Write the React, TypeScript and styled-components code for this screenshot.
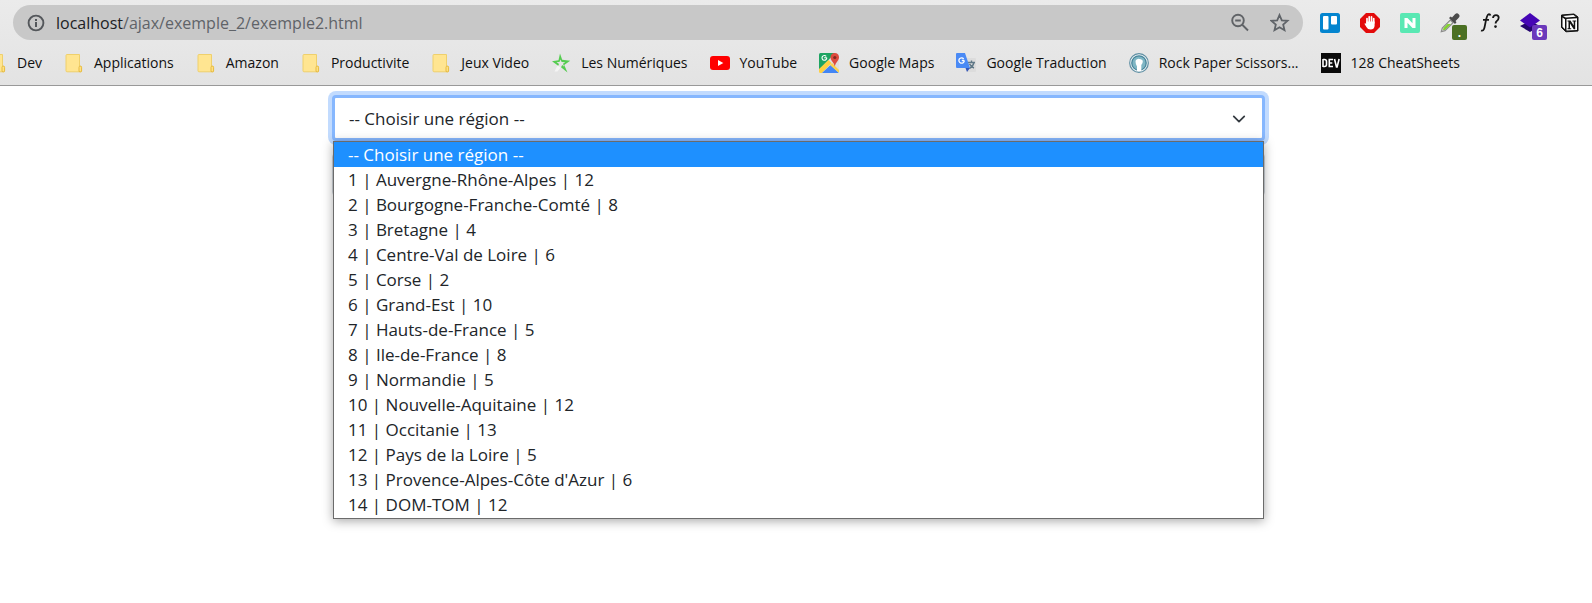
import { useState } from 'react';
import type { ReactNode } from 'react';
import styled, { createGlobalStyle } from 'styled-components';

const GlobalStyle = createGlobalStyle`
  * { box-sizing: border-box; }
  body {
    margin: 0;
    min-height: 100vh;
    background: #fff;
    color: #212529;
    font-family: "Open Sans", "Noto Sans", sans-serif;
  }
`;

const BrowserBar = styled.header`
  display: flex;
  flex-direction: column;
  gap: 10px;
  height: 86px;
  padding: 5px 0 0;
  overflow: hidden;
  background: linear-gradient(#ebebeb, #e3e3e3);
  border-bottom: 1px solid #999;
`;

const AddressRow = styled.div`
  display: flex;
  align-items: center;
  gap: 17px;
  padding: 0 12px 0 13px;
`;

const AddressBar = styled.div`
  flex: 1;
  min-width: 0;
  display: flex;
  align-items: center;
  height: 35px;
  padding: 0 13px 0 12px;
  border-radius: 18px;
  background: #c8c8c8;
`;

const Host = styled.label`
  margin-left: 11px;
  font-size: 16px;
  line-height: 24px;
  color: #202124;
`;

const PathInput = styled.input`
  flex: 1;
  min-width: 0;
  padding: 0;
  border: 0;
  outline: 0;
  background: transparent;
  font-family: inherit;
  font-size: 16px;
  line-height: 24px;
  color: #5f6368;
`;

const IconButton = styled.button`
  position: relative;
  flex: none;
  display: flex;
  width: 20px;
  height: 20px;
  padding: 0;
  border: 0;
  background: none;
`;

const AddressActions = styled.div`
  display: flex;
  gap: 20px;
`;

const Extensions = styled.nav`
  display: flex;
  gap: 20px;
`;

const Badge = styled.span<{ $color: string }>`
  position: absolute;
  left: 12px;
  top: 12px;
  width: 15px;
  height: 15px;
  border-radius: 2px;
  background: ${(p) => p.$color};
  color: #fff;
  font-size: 12px;
  font-weight: 700;
  line-height: 16px;
  text-align: center;
`;

const Bookmarks = styled.nav`
  display: flex;
  gap: 22px;
  margin-left: -13px;
  height: 26px;
  align-items: center;
`;

const BookmarkLink = styled.a`
  flex: none;
  display: flex;
  align-items: center;
  gap: 10px;
  color: #111;
  font-size: 14px;
  line-height: 20px;
  text-decoration: none;
  white-space: nowrap;
`;

const Page = styled.main`
  display: grid;
  grid-template-columns: 332fr 933fr 327fr;
  padding-top: 9px;
`;

const Form = styled.form`
  grid-column: 2;
  display: flex;
  flex-direction: column;
  gap: 12px;
`;

const Field = styled.div`
  position: relative;
  display: flex;
`;

const RegionSelect = styled.select<{ $focused?: boolean }>`
  width: 100%;
  height: ${(p) => (p.$focused ? 46 : 43)}px;
  padding: 0 14px;
  appearance: none;
  border: ${(p) => (p.$focused ? '3px solid #86b7fe' : '1px solid #ced4da')};
  border-radius: 4px;
  outline: 0;
  background: #fff;
  box-shadow: ${(p) => (p.$focused ? '0 0 0 4px #c2dbfe' : 'none')};
  color: #212529;
  font-family: inherit;
  font-size: 17px;
`;

const Chevron = styled.svg`
  position: absolute;
  right: 19px;
  top: 17px;
  pointer-events: none;
`;

const OptionList = styled.ul`
  position: absolute;
  z-index: 1;
  top: 100%;
  left: 1px;
  right: 1px;
  margin: 0;
  padding: 0 0 1px;
  list-style: none;
  border: 1px solid #6b6b6b;
  background: #fff;
  box-shadow: 0 2px 10px rgba(0, 0, 0, 0.35);
`;

const Option = styled.li<{ $active: boolean }>`
  height: 25px;
  padding: 0 14px;
  font-size: 17px;
  line-height: 25px;
  color: ${(p) => (p.$active ? '#fff' : '#212529')};
  background: ${(p) => (p.$active ? '#1e90ff' : '#fff')};
  cursor: default;
`;

const Icon = ({ children }: { children: ReactNode }) => (
  <svg width="20" height="20" viewBox="0 0 20 20" aria-hidden="true">
    {children}
  </svg>
);

const InfoIcon = () => (
  <Icon>
    <circle cx="11" cy="10" r="7.4" fill="none" stroke="#54575b" strokeWidth="1.9" />
    <path d="M10 9h2v5h-2zM10 6h2v2h-2z" fill="#54575b" />
  </Icon>
);

const ZoomOutIcon = () => (
  <Icon>
    <g fill="none" stroke="#606367" strokeWidth="1.9">
      <circle cx="8" cy="7.500" r="5.8" />
      <path d="M12 11.500l6 6M5.200 7.500h5.600" />
    </g>
  </Icon>
);

const StarIcon = () => (
  <Icon>
    <path
      d="M9.500 2l2.300 5.300 5.700.5-4.300 3.800 1.300 5.600-5-3-5 3 1.300-5.600L1.500 7.800l5.700-.5z"
      fill="none"
      stroke="#5f6368"
      strokeWidth="1.8"
    />
  </Icon>
);

const FolderIcon = () => (
  <Icon>
    <path d="M3 1.500h12.500v12h2v4.500q0 .8-1 .8H3q-1 0-1-1V2.500q0-1 1-1z" fill="#ffe591" stroke="#efd06c" />
    <path d="M15 18.500v-4q0-1.500 1.200-1.500t1.400 1.500v3.500q0 .8-1 .8z" fill="#ffe083" stroke="#e6bb43" />
  </Icon>
);

const GreenStarIcon = () => (
  <Icon>
    <path d="M3.500 18.500l3-6 3 2-3 4z" fill="#f4f4f4" />
    <path
      d="M9 .5l2.200 6.300 8 .9-6 4.200 3.300 7.600-6.500-5.200L11.200 12l2 1.800-1.200-3 2.200-1.600-3.500-.2L9.300 6.500 8.500 9H5.500L8 11l-.8 1.800L1 8.300l6.500-1z"
      fill="#55cc50"
    />
  </Icon>
);

const YouTubeIcon = () => (
  <Icon>
    <rect y="3" width="20" height="14" rx="3" fill="#f00" />
    <path d="M8 7l5.300 3L8 13z" fill="#fff" />
  </Icon>
);

const MapsIcon = () => (
  <Icon>
    <clipPath id="map-frame"><rect width="20" height="20" rx="1.500" /></clipPath>
    <g clipPath="url(#map-frame)">
      <path d="M0 0h20v20H0z" fill="#dedede" />
      <path d="M0 0h16L0 17z" fill="#1da462" />
      <path d="M0 16L9.500 7l3 3L3 20H0z" fill="#ffd041" />
      <path d="M3 20l8.500-8L20 20z" fill="#4386f5" />
      <path d="M11 12l2-2 7 7v3z" fill="#fbd24e" />
    </g>
    <path d="M7.800 4.800H5.200M7.200 3.300a2.400 2.400 0 10.6 1.500" fill="none" stroke="#fff" strokeWidth="1.100" />
    <path d="M15.800 0a4.400 4.400 0 00-4.300 4.500c0 3 3.300 4.500 4.300 9 1-4.500 4.200-6 4.200-9A4.300 4.300 0 0015.800 0z" fill="#dd4b3e" />
    <circle cx="15.800" cy="4.500" r="1.600" fill="#812820" />
  </Icon>
);

const TranslateIcon = () => (
  <Icon>
    <path d="M9 5h10q1 0 1 1v12q0 1-1 1h-8z" fill="#dcdcdc" />
    <path d="M12 9.500h7M15.500 7.500v2M18 9.500q-1 4-4.500 6M13.500 11q2 3 4.500 4" fill="none" stroke="#607988" strokeWidth="1.400" />
    <path d="M1 0h8l5 15H1q-1 0-1-1V1q0-1 1-1z" fill="#4a8af5" />
    <path d="M9.500 15H14l-3 4z" fill="#3456b8" />
    <path d="M8.200 7.500H5.800M7.700 5.800a2.700 2.700 0 10.6 1.700" fill="none" stroke="#fff" strokeWidth="1.300" />
  </Icon>
);

const FistIcon = () => (
  <Icon>
    <circle cx="10" cy="10" r="9.300" fill="#f3f7f8" stroke="#5f8fa3" strokeWidth="1.200" />
    <circle cx="10" cy="10" r="7.200" fill="#7fb6c4" stroke="#47859b" strokeWidth="1.300" />
    <path d="M6.500 8.500q0-2 1.700-2.200 1-.8 2-.2 1.200-.5 1.900.3 1.700.1 1.700 2.200 0 2-1.500 3.300V18H8v-4.500Q6.500 11 6.500 8.500z" fill="#fff" />
  </Icon>
);

const DevIcon = () => (
  <Icon>
    <path d="M0 0h20v20H0z" fill="#0a0a0a" />
    <path
      d="M2 6v8M2 6.500h1.500q2 0 2 2v3q0 2-2 2H2M12 6.500H8.300v7H12M8.300 10h3M13.500 6l2 8h.6l2-8"
      fill="none"
      stroke="#fff"
      strokeWidth="1.600"
    />
  </Icon>
);

const TrelloIcon = () => (
  <Icon>
    <rect width="20" height="20" rx="2.500" fill="#0485cf" />
    <rect x="3" y="3" width="5.500" height="13.500" rx="1" fill="#fff" />
    <rect x="11" y="3" width="6" height="8.500" rx="1" fill="#fff" />
  </Icon>
);

const BlockIcon = () => (
  <Icon>
    <path d="M6 0h8l6 6v8l-6 6H6l-6-6V6z" fill="#e30b0b" />
    <path
      d="M7 10V5.500M9.200 9V3.800M11.500 9V3.800M13.700 10V5.500"
      stroke="#fff"
      strokeWidth="1.700"
      strokeLinecap="round"
    />
    <path d="M6.200 8.500h8.400V13q-.5 3.500-4 3.500-3 0-4.200-2.500l-2-3.300q1-1 1.800.2z" fill="#fff" />
  </Icon>
);

const GreenNIcon = () => (
  <Icon>
    <rect width="20" height="20" rx="2" fill="#59e8b3" />
    <path d="M4.500 15V5h3l5 5.300V5h3v10h-3l-5-5.300V15z" fill="#fff" />
  </Icon>
);

const DropperIcon = () => (
  <Icon>
    <path d="M1.300 18.700l1-3.700 8-8 2.700 2.700-8 8z" fill="#e9efe2" stroke="#8b8b8b" strokeWidth="1.200" />
    <path d="M3 17l.5-2 4-4h3.500l-6 6z" fill="#83d12f" />
    <path d="M9 5l1.700-1.500 1.300 1L15 1.300Q17-.5 18.700 1.200 20.500 3 18.500 5l-3 3 1 1.300L15 11z" fill="#4c4c4c" />
  </Icon>
);

const FunctionIcon = () => (
  <Icon>
    <path d="M10.500 2.500q-.5-1.500-2-1.200C6.300 2 6 8 4.600 14q-.8 4.500-3.600 3.500M3 6.800h6" fill="none" stroke="#161616" strokeWidth="1.800" />
    <path d="M13 5q.3-2.800 3-2.800t2.700 2.600Q18.600 7 16.600 8.200q-1 .8-1 2.400" fill="none" stroke="#161616" strokeWidth="1.800" />
    <circle cx="15.500" cy="13.600" r="1.300" fill="#161616" />
  </Icon>
);

const LayersIcon = () => (
  <Icon>
    <path d="M0 13l10-5 10 5-10 6z" fill="#24046f" />
    <path d="M0 7.500l10-7.500 10 7.500-10 7z" fill="#4505b5" />
  </Icon>
);

const NotionIcon = () => (
  <Icon>
    <path d="M1.500 2L14 1l4 3v14l-12 .8-4.500-4.300z" fill="#111" stroke="#111" strokeLinejoin="round" />
    <path d="M3 2.900l10.500-.8 2.300 1.600-10 .8zM2.500 4.500L5 6.300v10l-2.500-2.500z" fill="#fff" />
    <path d="M6.500 6L17 5.200v11.700l-10.500.7z" fill="#fff" />
    <path d="M7.500 7.500h3l3.200 5V8.500h-1.200v-1h3.700v1h-1v7.700h-1.500L10 10.500v4.700h1.200v1H7.500v-1h1V8.500h-1z" fill="#111" />
  </Icon>
);

const bookmarks: { label: string; icon: ReactNode }[] = [
  { label: 'Dev', icon: <FolderIcon /> },
  { label: 'Applications', icon: <FolderIcon /> },
  { label: 'Amazon', icon: <FolderIcon /> },
  { label: 'Productivite', icon: <FolderIcon /> },
  { label: 'Jeux Video', icon: <FolderIcon /> },
  { label: 'Les Numériques', icon: <GreenStarIcon /> },
  { label: 'YouTube', icon: <YouTubeIcon /> },
  { label: 'Google Maps', icon: <MapsIcon /> },
  { label: 'Google Traduction', icon: <TranslateIcon /> },
  { label: 'Rock Paper Scissors...', icon: <FistIcon /> },
  { label: '128 CheatSheets', icon: <DevIcon /> },
];

const extensions: { name: string; icon: ReactNode; badge?: string; color?: string }[] = [
  { name: 'Trello', icon: <TrelloIcon /> },
  { name: 'AdBlock', icon: <BlockIcon /> },
  { name: 'N', icon: <GreenNIcon /> },
  { name: 'ColorZilla', icon: <DropperIcon />, badge: '.', color: '#4b7023' },
  { name: 'Fonts', icon: <FunctionIcon /> },
  { name: 'Layers', icon: <LayersIcon />, badge: '6', color: '#6b38bb' },
  { name: 'Notion', icon: <NotionIcon /> },
];

const options = [
  '-- Choisir une région --',
  '1 | Auvergne-Rhône-Alpes | 12',
  '2 | Bourgogne-Franche-Comté | 8',
  '3 | Bretagne | 4',
  '4 | Centre-Val de Loire | 6',
  '5 | Corse | 2',
  '6 | Grand-Est | 10',
  '7 | Hauts-de-France | 5',
  '8 | Ile-de-France | 8',
  '9 | Normandie | 5',
  '10 | Nouvelle-Aquitaine | 12',
  '11 | Occitanie | 13',
  '12 | Pays de la Loire | 5',
  "13 | Provence-Alpes-Côte d'Azur | 6",
  '14 | DOM-TOM | 12',
];

export default function App() {
  const [selected, setSelected] = useState(0);

  return (
    <>
      <GlobalStyle />
      <BrowserBar>
        <AddressRow>
          <AddressBar>
            <IconButton type="button" aria-label="Informations"><InfoIcon /></IconButton>
            <Host htmlFor="path">localhost</Host>
            <PathInput id="path" type="text" defaultValue="/ajax/exemple_2/exemple2.html" />
            <AddressActions>
              <IconButton type="button" aria-label="Zoom"><ZoomOutIcon /></IconButton>
              <IconButton type="button" aria-label="Favori"><StarIcon /></IconButton>
            </AddressActions>
          </AddressBar>
          <Extensions aria-label="Extensions">
            {extensions.map((e) => (
              <IconButton key={e.name} type="button" aria-label={e.name}>
                {e.icon}
                {e.badge && <Badge $color={e.color ?? '#000'}>{e.badge}</Badge>}
              </IconButton>
            ))}
          </Extensions>
        </AddressRow>
        <Bookmarks aria-label="Favoris">
          {bookmarks.map((b) => (
            <BookmarkLink key={b.label} href="#">
              {b.icon}
              <span>{b.label}</span>
            </BookmarkLink>
          ))}
        </Bookmarks>
      </BrowserBar>
      <Page>
        <Form>
          <Field>
            <RegionSelect
              $focused
              aria-label="Région"
              value={selected}
              onChange={(e) => setSelected(Number(e.target.value))}
            >
              {options.map((o, i) => <option key={o} value={i}>{o}</option>)}
            </RegionSelect>
            <Chevron width="14" height="14" viewBox="0 0 16 16" aria-hidden="true">
              <path d="M2 5l6 6 6-6" fill="none" stroke="#343a40" strokeWidth="2" strokeLinecap="round" strokeLinejoin="round" />
            </Chevron>
            <OptionList role="listbox" aria-label="Régions">
              {options.map((o, i) => (
                <Option key={o} role="option" aria-selected={i === selected} $active={i === selected} onClick={() => setSelected(i)}>
                  {o}
                </Option>
              ))}
            </OptionList>
          </Field>
          <RegionSelect aria-label="Département" />
        </Form>
      </Page>
    </>
  );
}
